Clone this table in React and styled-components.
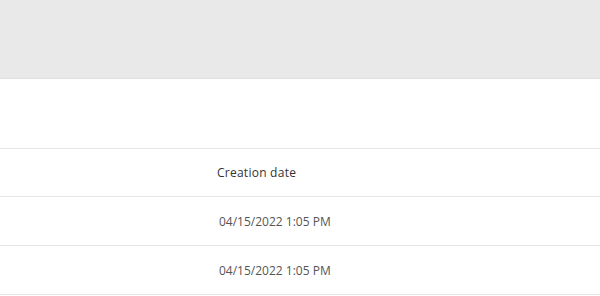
import React from 'react'
import styled, { createGlobalStyle } from 'styled-components'

const GlobalStyle = createGlobalStyle`
  html, body {
    margin: 0;
    padding: 0;
    background: #fff;
    font-family: "Open Sans", "Liberation Sans", sans-serif;
  }
`

const Page = styled.div`
  width: 600px;
  height: 296px;
  overflow: hidden;
`

const TopBar = styled.div`
  height: 78px;
  background: #e9e9e9;
  border-bottom: 1px solid #e0e0e0;
`

const Toolbar = styled.div`
  height: 69px;
`

const Table = styled.div`
  display: flex;
  flex-direction: column;
`

const Row = styled.div`
  display: grid;
  grid-template-columns: 207px 1fr;
  align-items: center;
  height: ${p => (p.$head ? '47px' : '48px')};
  border-top: 1px solid #e6e6e6;
  &:last-child {
    border-bottom: 1px solid #e6e6e6;
  }
`

const Cell = styled.div`
  font-size: 12px;
  color: ${p => (p.$head ? '#333' : '#555')};
  padding-left: ${p => (p.$head ? '10px' : '12px')};
  letter-spacing: ${p => (p.$head ? '0.25px' : '0')};
  white-space: nowrap;
`

const rows = ['04/15/2022 1:05 PM', '04/15/2022 1:05 PM']

export default function App() {
  return (
    <Page>
      <GlobalStyle />
      <TopBar />
      <Toolbar />
      <Table>
        <Row $head>
          <Cell />
          <Cell $head>Creation date</Cell>
        </Row>
        {rows.map((d, i) => (
          <Row key={i}>
            <Cell />
            <Cell>{d}</Cell>
          </Row>
        ))}
      </Table>
    </Page>
  )
}
